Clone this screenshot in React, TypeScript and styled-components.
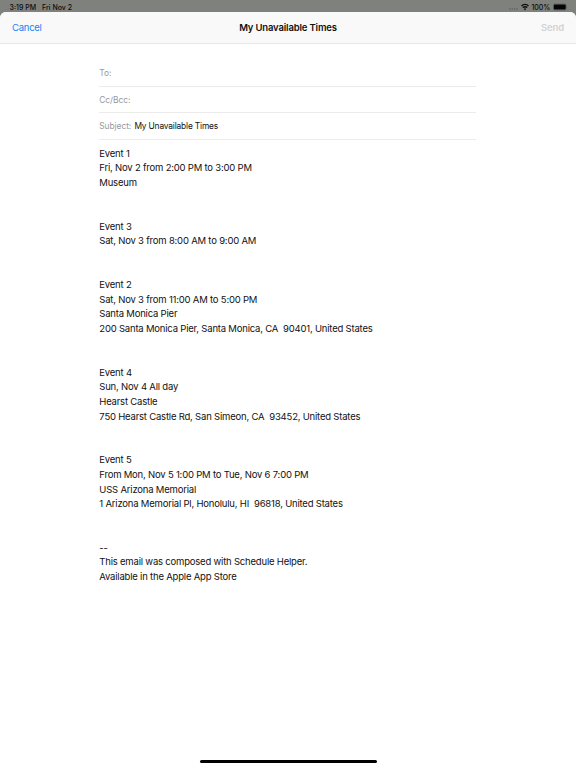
import React from "react";
import styled, { createGlobalStyle } from "styled-components";

const GlobalStyle = createGlobalStyle`
  * { box-sizing: border-box; }
  html, body { margin: 0; background: #7f817d; }
  body { font-family: Inter, "Liberation Sans", sans-serif; color: #111; }
`;

const Screen = styled.div`
  width: 576px;
  height: 768px;
  display: flex;
  flex-direction: column;
  background: #7f817d;
  overflow: hidden;
`;

const StatusBar = styled.div`
  height: 11.5px;
  flex: none;
  display: flex;
  justify-content: space-between;
  padding: 2px 8px 0 9.5px;
  font-size: 7px;
  line-height: 11px;
  font-weight: 500;
  color: #0c0c0c;
`;

const StatusGroup = styled.div<{ $gap: number }>`
  display: flex;
  gap: ${(p) => p.$gap}px;
`;

const StatusIcon = styled.svg`
  flex: none;
  display: block;
`;

const Sheet = styled.main`
  flex: 1;
  display: flex;
  flex-direction: column;
  background: #fff;
  border-radius: 6px 6px 0 0;
  overflow: hidden;
`;

const NavBar = styled.header`
  height: 32px;
  flex: none;
  display: grid;
  grid-template-columns: 1fr auto 1fr;
  align-items: center;
  padding: 0 12px;
  background: #f9f9f9;
  border-bottom: 1px solid #e6e6e6;
  font-size: 9.5px;
`;

const NavButton = styled.button<{ $muted?: boolean }>`
  justify-self: ${(p) => (p.$muted ? "end" : "start")};
  border: 0;
  padding: 0;
  background: none;
  font: inherit;
  font-weight: ${(p) => (p.$muted ? 600 : 400)};
  letter-spacing: ${(p) => (p.$muted ? -0.15 : -0.25)}px;
  color: ${(p) => (p.$muted ? "#d3d3d3" : "#1484fb")};
`;

const Title = styled.h1`
  margin: 0;
  font-size: 9.5px;
  font-weight: 600;
  letter-spacing: -0.16px;
`;

const Compose = styled.section`
  width: 377px;
  margin: 17px 0 0 99.3px;
  flex: 1;
`;

const Field = styled.div`
  height: 26.4px;
  display: flex;
  align-items: center;
  gap: 3.2px;
  padding-top: 0.6px;
  border-bottom: 1px solid #ececec;
  font-size: 8.4px;
`;

const FieldLabel = styled.span`
  letter-spacing: -0.05px;
  color: #98989b;
`;

const FieldValue = styled.span`
  letter-spacing: -0.17px;
`;

const Message = styled.div`
  padding-top: 7.2px;
  font-size: 9.5px;
  line-height: 14.6px;
  letter-spacing: -0.2px;
  white-space: pre;
`;

const Entry = styled.div`
  margin-bottom: 29.2px;
`;

const HomeArea = styled.footer`
  height: 10px;
  flex: none;
  display: flex;
  justify-content: center;
  padding-top: 2px;
`;

const HomeIndicator = styled.div`
  width: 177px;
  height: 3.3px;
  border-radius: 2px;
  background: #000;
`;

const entries: string[][] = [
  ["Event 1", "Fri, Nov 2 from 2:00 PM to 3:00 PM", "Museum"],
  ["Event 3", "Sat, Nov 3 from 8:00 AM to 9:00 AM"],
  [
    "Event 2",
    "Sat, Nov 3 from 11:00 AM to 5:00 PM",
    "Santa Monica Pier",
    "200 Santa Monica Pier, Santa Monica, CA  90401, United States",
  ],
  [
    "Event 4",
    "Sun, Nov 4 All day",
    "Hearst Castle",
    "750 Hearst Castle Rd, San Simeon, CA  93452, United States",
  ],
  [
    "Event 5",
    "From Mon, Nov 5 1:00 PM to Tue, Nov 6 7:00 PM",
    "USS Arizona Memorial",
    "1 Arizona Memorial Pl, Honolulu, HI  96818, United States",
  ],
  [
    "--",
    "This email was composed with Schedule Helper.",
    "Available in the Apple App Store",
  ],
];

const StatusIcons = () => (
  <StatusGroup $gap={2.7}>
    <StatusIcon width="9" height="9" viewBox="0 0 9 9" fill="#555753">
      {[0.8, 3.2, 5.6, 8].map((x) => (
        <circle key={x} cx={x} cy="7" r="0.65" />
      ))}
    </StatusIcon>
    <StatusIcon width="8" height="9" viewBox="0 0 8 9" fill="none" stroke="#0c0c0c" strokeWidth="1.4">
      <path d="M0.5 4a5 5 0 0 1 7 0M1.8 5.6a3.1 3.1 0 0 1 4.4 0" />
      <path d="M4 8.2 2.8 6.9a1.7 1.7 0 0 1 2.4 0z" fill="#0c0c0c" stroke="none" />
    </StatusIcon>
    <span>100%</span>
    <StatusIcon width="15" height="9" viewBox="0 0 15 9">
      <rect x="0.25" y="1.95" width="13" height="6" rx="1.5" fill="none" stroke="#4c4d4b" strokeWidth="0.5" />
      <rect x="0.8" y="2.5" width="11.9" height="4.9" rx="0.9" fill="#050505" />
      <path d="M13.8 4.1q.8.9 0 1.8z" fill="#4c4d4b" />
    </StatusIcon>
  </StatusGroup>
);

export default function App() {
  return (
    <>
      <GlobalStyle />
      <Screen>
        <StatusBar>
          <StatusGroup $gap={6}>
            <span>3:19 PM</span>
            <span>Fri Nov 2</span>
          </StatusGroup>
          <StatusIcons />
        </StatusBar>
        <Sheet>
          <NavBar>
            <NavButton>Cancel</NavButton>
            <Title>My Unavailable Times</Title>
            <NavButton $muted>Send</NavButton>
          </NavBar>
          <Compose>
            <Field>
              <FieldLabel>To:</FieldLabel>
            </Field>
            <Field>
              <FieldLabel>Cc/Bcc:</FieldLabel>
            </Field>
            <Field>
              <FieldLabel>Subject:</FieldLabel>
              <FieldValue>My Unavailable Times</FieldValue>
            </Field>
            <Message>
              {entries.map((lines) => (
                <Entry key={lines[0]}>
                  {lines.map((line) => (
                    <div key={line}>{line}</div>
                  ))}
                </Entry>
              ))}
            </Message>
          </Compose>
          <HomeArea>
            <HomeIndicator />
          </HomeArea>
        </Sheet>
      </Screen>
    </>
  );
}
